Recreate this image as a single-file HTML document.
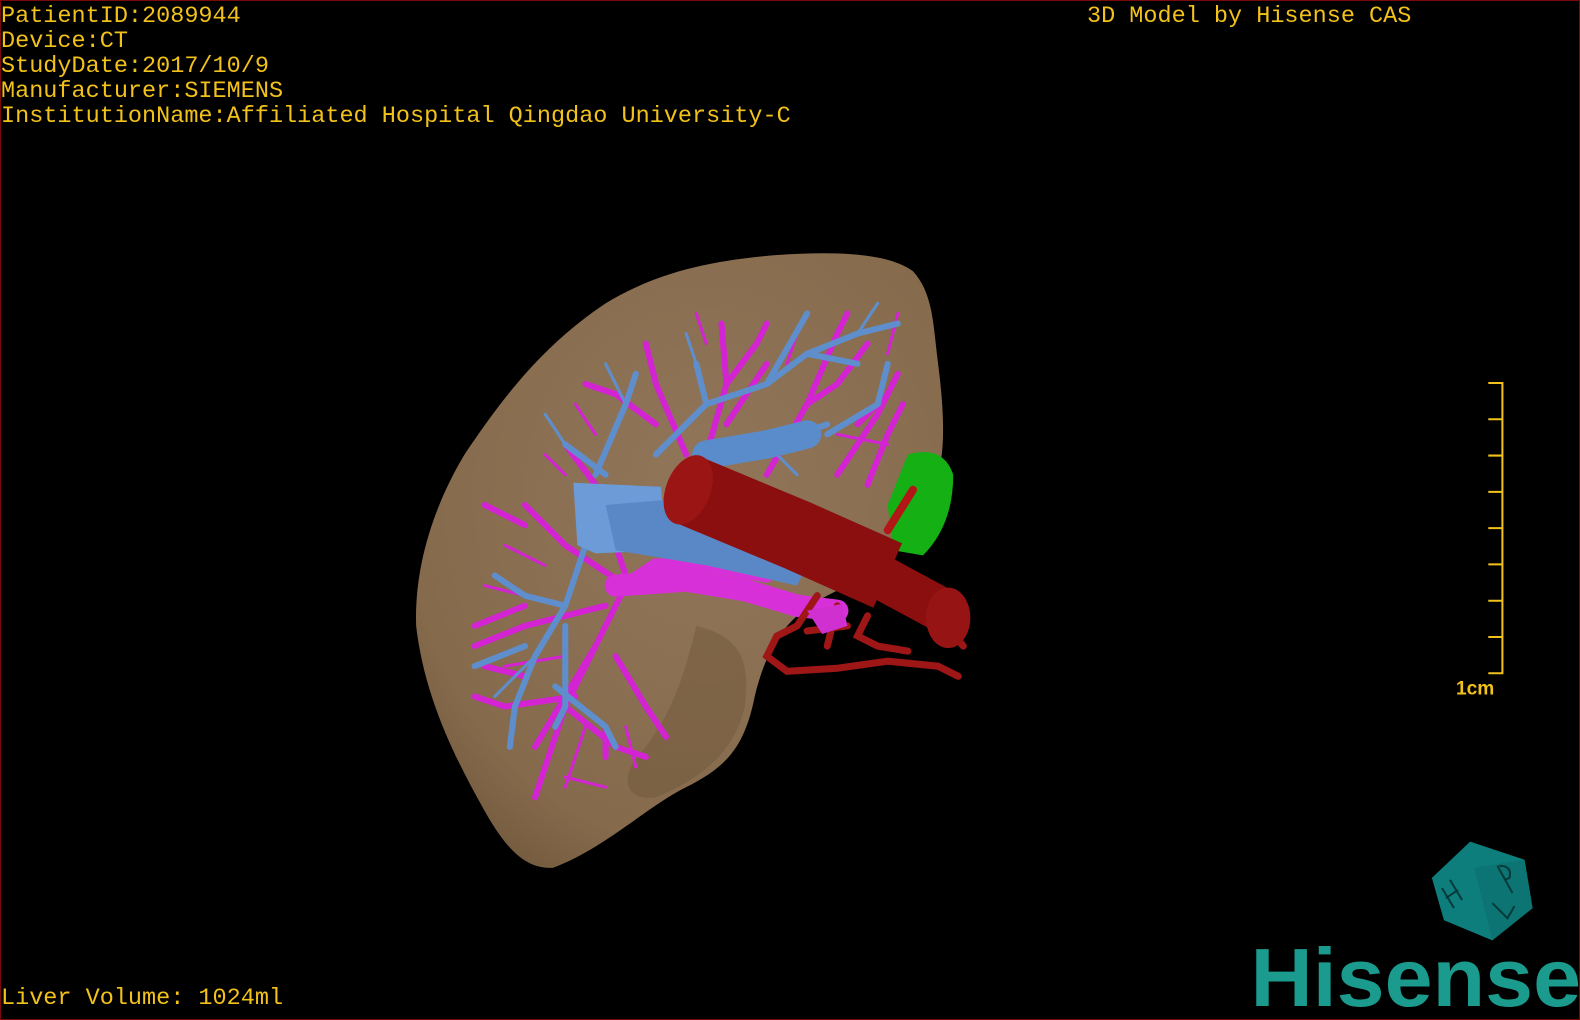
<!DOCTYPE html>
<html><head><meta charset="utf-8"><style>
html,body{margin:0;padding:0;background:#000;}
#w{position:relative;width:1580px;height:1020px;overflow:hidden;background:#000;box-sizing:border-box;border:1px solid #7a0a0a;}
.t{position:absolute;color:#f2c21a;font-family:"Liberation Mono",monospace;font-size:23.5px;line-height:25px;white-space:pre;letter-spacing:0}
svg{position:absolute;left:0;top:0}
</style></head><body><div id="w">
<svg width="1580" height="1020" viewBox="0 0 1568 1012" preserveAspectRatio="none">
<defs>
<radialGradient id="lv" cx="0.55" cy="0.4" r="0.75"><stop offset="0" stop-color="#92765a"/><stop offset="0.75" stop-color="#866a4c"/><stop offset="1" stop-color="#6e5539"/></radialGradient>
</defs>
<path fill="url(#lv)" d="M770,252 C830,248 880,250 905,268 C925,290 925,320 930,360 C935,400 938,440 930,470 C915,520 880,560 820,590 C780,610 760,640 748,690 C738,740 720,760 680,780 C640,800 600,840 548,860 C520,862 500,840 478,800 C450,750 420,690 412,620 C410,560 430,500 460,450 C500,390 540,340 600,300 C650,270 700,258 770,252 Z"/>
<path fill="#6f5639" opacity="0.45" d="M690,620 C730,630 745,650 738,700 C730,740 700,770 650,790 C620,795 610,770 640,740 C670,700 680,660 690,620 Z"/>
<g fill="none" stroke-linecap="round" stroke="#d323d3" stroke-width="6">
<path d="M620,580 L590,640 L560,700 L540,760 M590,640 L530,740 M600,600 L520,620 L470,640 M570,690 L500,700 L470,690 M560,700 L610,740 L640,750 M610,650 L640,700 L660,730 M620,580 L560,540 L520,500 M620,570 L590,480 L560,440 M680,450 L650,380 L640,340 M650,420 L610,390 L580,380 M700,450 L720,380 L715,320 M720,380 L750,340 L760,320 M760,470 L800,400 L830,330 L840,310 M800,400 L830,380 L860,340 M830,470 L870,410 L890,370 M860,480 L880,430 L895,400 M850,420 L880,390 M720,420 L760,360 M540,760 L530,790 M600,720 L600,750 M480,660 L520,670 M470,620 L520,600 M520,520 L480,500"/>
<path stroke-width="3" d="M540,560 L500,540 M560,650 L500,660 M580,720 L560,780 M620,720 L630,760 M590,430 L570,400 M700,340 L690,310 M780,360 L790,330 M880,350 L890,310 M830,430 L880,440 M600,780 L560,770 M520,590 L480,580 M560,470 L540,450"/>
<path stroke="#d830d8" stroke-width="22" d="M610,580 L680,575 L740,585 L790,600 L830,605"/>
<path stroke="#d830d8" stroke-width="14" d="M620,580 L650,560 L700,560 L760,570"/>
</g>
<g fill="none" stroke-linecap="round" stroke="#5e8fcc" stroke-width="6">
<path d="M580,540 L560,600 L530,650 L510,700 L505,740 M560,600 L520,590 L490,570 M560,620 L560,700 L550,720 M590,470 L620,400 L630,370 M600,470 L560,440 M650,450 L700,400 L760,380 L800,350 L850,330 L890,320 M760,380 L800,310 M700,400 L690,360 M800,350 L850,360 M820,430 L870,400 L880,360 M700,460 L760,440 L820,420 M550,680 L600,720 L610,740 M520,640 L470,660 M600,540 L640,530 L700,540 L760,520"/>
<path stroke-width="3" d="M530,650 L490,690 M620,400 L600,360 M850,330 L870,300 M690,360 L680,330 M560,440 L540,410 M760,440 L790,470"/>
<path stroke="#5a8ccc" stroke-width="28" d="M700,450 L760,440 L800,430"/>
</g>
<path fill="#6c9bd8" d="M568,478 L655,482 L660,545 L590,548 L572,540 Z"/>
<path fill="#5a88c6" d="M600,500 L660,495 L760,530 L800,560 L790,580 L700,560 L610,545 Z"/>
<path fill="#14b014" d="M900,450 Q935,440 945,470 Q945,520 915,550 L885,545 L880,500 Z"/>
<path fill="none" stroke="#b31616" stroke-width="8" stroke-linecap="round" d="M905,485 L880,525"/>
<path fill="none" stroke="#8c0f0f" stroke-width="70" stroke-linecap="butt" d="M682,485 L790,530 L880,570"/>
<path fill="none" stroke="#8c0f0f" stroke-width="44" stroke-linecap="round" d="M870,570 L935,605"/>
<ellipse cx="682" cy="485" rx="22" ry="36" transform="rotate(22 682 485)" fill="#9c1515"/>
<path fill="none" stroke="#9e1616" stroke-width="7" stroke-linecap="round" d="M810,590 L790,620 L770,630 L760,650 L780,665 L830,662 L880,655 L930,660 L950,670 M830,600 L820,640 M860,610 L850,630 L870,640 L900,645 M800,625 L840,620 M930,610 L955,640"/>
<ellipse cx="940" cy="612" rx="22" ry="30" fill="#961414"/>
<path fill="#d030d0" d="M800,605 L835,598 L840,620 L815,628 Z"/>
<g stroke="#f2c21a" stroke-width="2" fill="none">
<path d="M1476,379 H1490 V667 H1476 M1476,415 H1490 M1476,451 H1490 M1476,487 H1490 M1476,523 H1490 M1476,559 H1490 M1476,595 H1490 M1476,631 H1490"/>
</g>
<text x="1444" y="688" fill="#f2c21a" font-family="Liberation Sans,sans-serif" font-size="19" font-weight="bold">1cm</text>
<path fill="#0e7e7c" d="M1458,834 L1512,852 L1520,900 L1480,932 L1432,912 L1420,870 Z"/>
<path fill="#0b6e6c" d="M1462,860 L1512,852 L1520,900 L1480,932 Z" opacity="0.6"/>
<path fill="none" stroke="#063a3a" stroke-width="2" d="M1485,858 L1500,885 M1487,858 Q1500,858 1497,870 L1492,872 M1480,895 L1495,910 L1502,898 M1430,880 L1442,900 M1438,872 L1450,892 M1434,890 L1446,882"/>
<text x="1240" y="997" fill="#1a9b8e" font-family="Liberation Sans,sans-serif" font-weight="bold" font-size="82" textLength="328" lengthAdjust="spacingAndGlyphs">Hisense</text>
</svg>
<div class="t" style="left:0;top:3px">PatientID:2089944
Device:CT
StudyDate:2017/10/9
Manufacturer:SIEMENS
InstitutionName:Affiliated Hospital Qingdao University-C</div>
<div class="t" style="left:1086px;top:3px">3D Model by Hisense CAS</div>
<div class="t" style="left:0;top:985px">Liver Volume: 1024ml</div>
</div></body></html>
